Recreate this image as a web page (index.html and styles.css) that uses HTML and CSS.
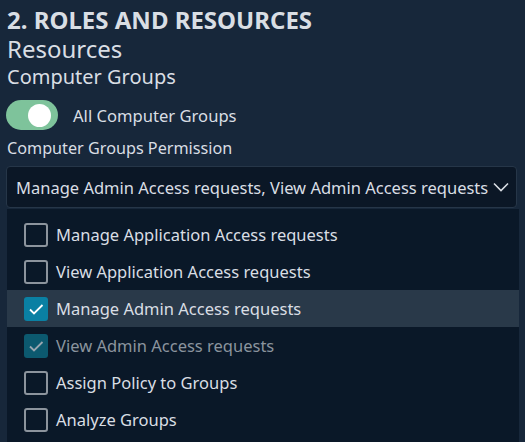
FILE: index.html
```html
<!DOCTYPE html>
<html>
<head>
<meta charset="utf-8">
<link rel="stylesheet" href="styles.css">
</head>
<body>
<div class="page">
  <h1 class="title">2. ROLES AND RESOURCES</h1>
  <h2 class="subtitle">Resources</h2>
  <h3 class="section">Computer Groups</h3>
  <div class="toggle-row">
    <span class="toggle"><span class="knob"></span></span>
    <span class="toggle-label">All Computer Groups</span>
  </div>
  <div class="field-label">Computer Groups Permission</div>
  <div class="select">
    <span class="select-value">Manage Admin Access requests, View Admin Access requests</span>
    <svg class="chevron" width="16" height="10" viewBox="0 0 16 10"><path d="M1 1.5 L8 8.5 L15 1.5" fill="none" stroke="#d9dee4" stroke-width="1.6"/></svg>
  </div>
  <ul class="menu">
    <li class="item"><span class="box"></span><span>Manage Application Access requests</span></li>
    <li class="item"><span class="box"></span><span>View Application Access requests</span></li>
    <li class="item hover"><span class="box checked"><svg width="24" height="24" viewBox="0 0 24 24"><path d="M6 12.5 L10 16.5 L18.5 8" fill="none" stroke="#ffffff" stroke-width="1.8"/></svg></span><span>Manage Admin Access requests</span></li>
    <li class="item disabled"><span class="box checked"><svg width="24" height="24" viewBox="0 0 24 24"><path d="M6 12.5 L10 16.5 L18.5 8" fill="none" stroke="#9aa6b0" stroke-width="1.8"/></svg></span><span>View Admin Access requests</span></li>
    <li class="item"><span class="box"></span><span>Assign Policy to Groups</span></li>
    <li class="item"><span class="box"></span><span>Analyze Groups</span></li>
  </ul>
</div>
</body>
</html>
```

FILE: styles.css
```css
html, body {
  margin: 0;
  padding: 0;
  background: #17273a;
}
body {
  font-family: "Noto Sans", "Open Sans", sans-serif;
  color: #d9dee4;
  width: 525px;
  height: 442px;
  overflow: hidden;
}
.page {
  padding: 5px 0 0 7px;
}
.title {
  margin: 0;
  font-size: 24px;
  font-weight: 700;
  line-height: 30px;
}
.subtitle {
  margin: 0;
  font-size: 24px;
  font-weight: 400;
  line-height: 28px;
}
.section {
  margin: 0;
  font-size: 20px;
  font-weight: 400;
  line-height: 28px;
}
.toggle-row {
  display: flex;
  align-items: center;
  margin-top: 9px;
  height: 30px;
}
.toggle {
  width: 52px;
  height: 30px;
  border-radius: 15px;
  background: #7ec39b;
  display: flex;
  align-items: center;
  justify-content: flex-end;
  padding-right: 7px;
  box-sizing: border-box;
  margin-left: -1px;
}
.knob {
  width: 23px;
  height: 23px;
  border-radius: 50%;
  background: #ffffff;
}
.toggle-label {
  margin-left: 15px;
  font-size: 16.6px;
}
.field-label {
  margin-top: 6px;
  font-size: 16.2px;
  line-height: 24px;
}
.select {
  margin: 6px 0 0 -1px;
  width: 511px;
  height: 42px;
  box-sizing: border-box;
  background: #0b1726;
  border: 1px solid #263648;
  border-radius: 4px;
  display: flex;
  align-items: center;
  justify-content: space-between;
  padding: 0 7px 0 9px;
  font-size: 16.5px;
}
.chevron {
  display: block;
}
.menu {
  list-style: none;
  margin: 1px 0 0 0;
  padding: 7px 0 10px 0;
  width: 512px;
  background: #0a1828;
}
.item {
  height: 37px;
  display: flex;
  align-items: center;
  padding-left: 17px;
  font-size: 16.5px;
}
.item.hover {
  background: #293949;
}
.item.disabled {
  color: #8a949e;
}
.box {
  width: 24px;
  height: 24px;
  box-sizing: border-box;
  border: 2px solid #8c949d;
  border-radius: 3px;
  margin-right: 8px;
  flex: none;
}
.box.checked {
  border: none;
  background: #0a80a3;
}
.box svg {
  display: block;
}
.item.disabled .box.checked {
  background: #0c596f;
}
```
